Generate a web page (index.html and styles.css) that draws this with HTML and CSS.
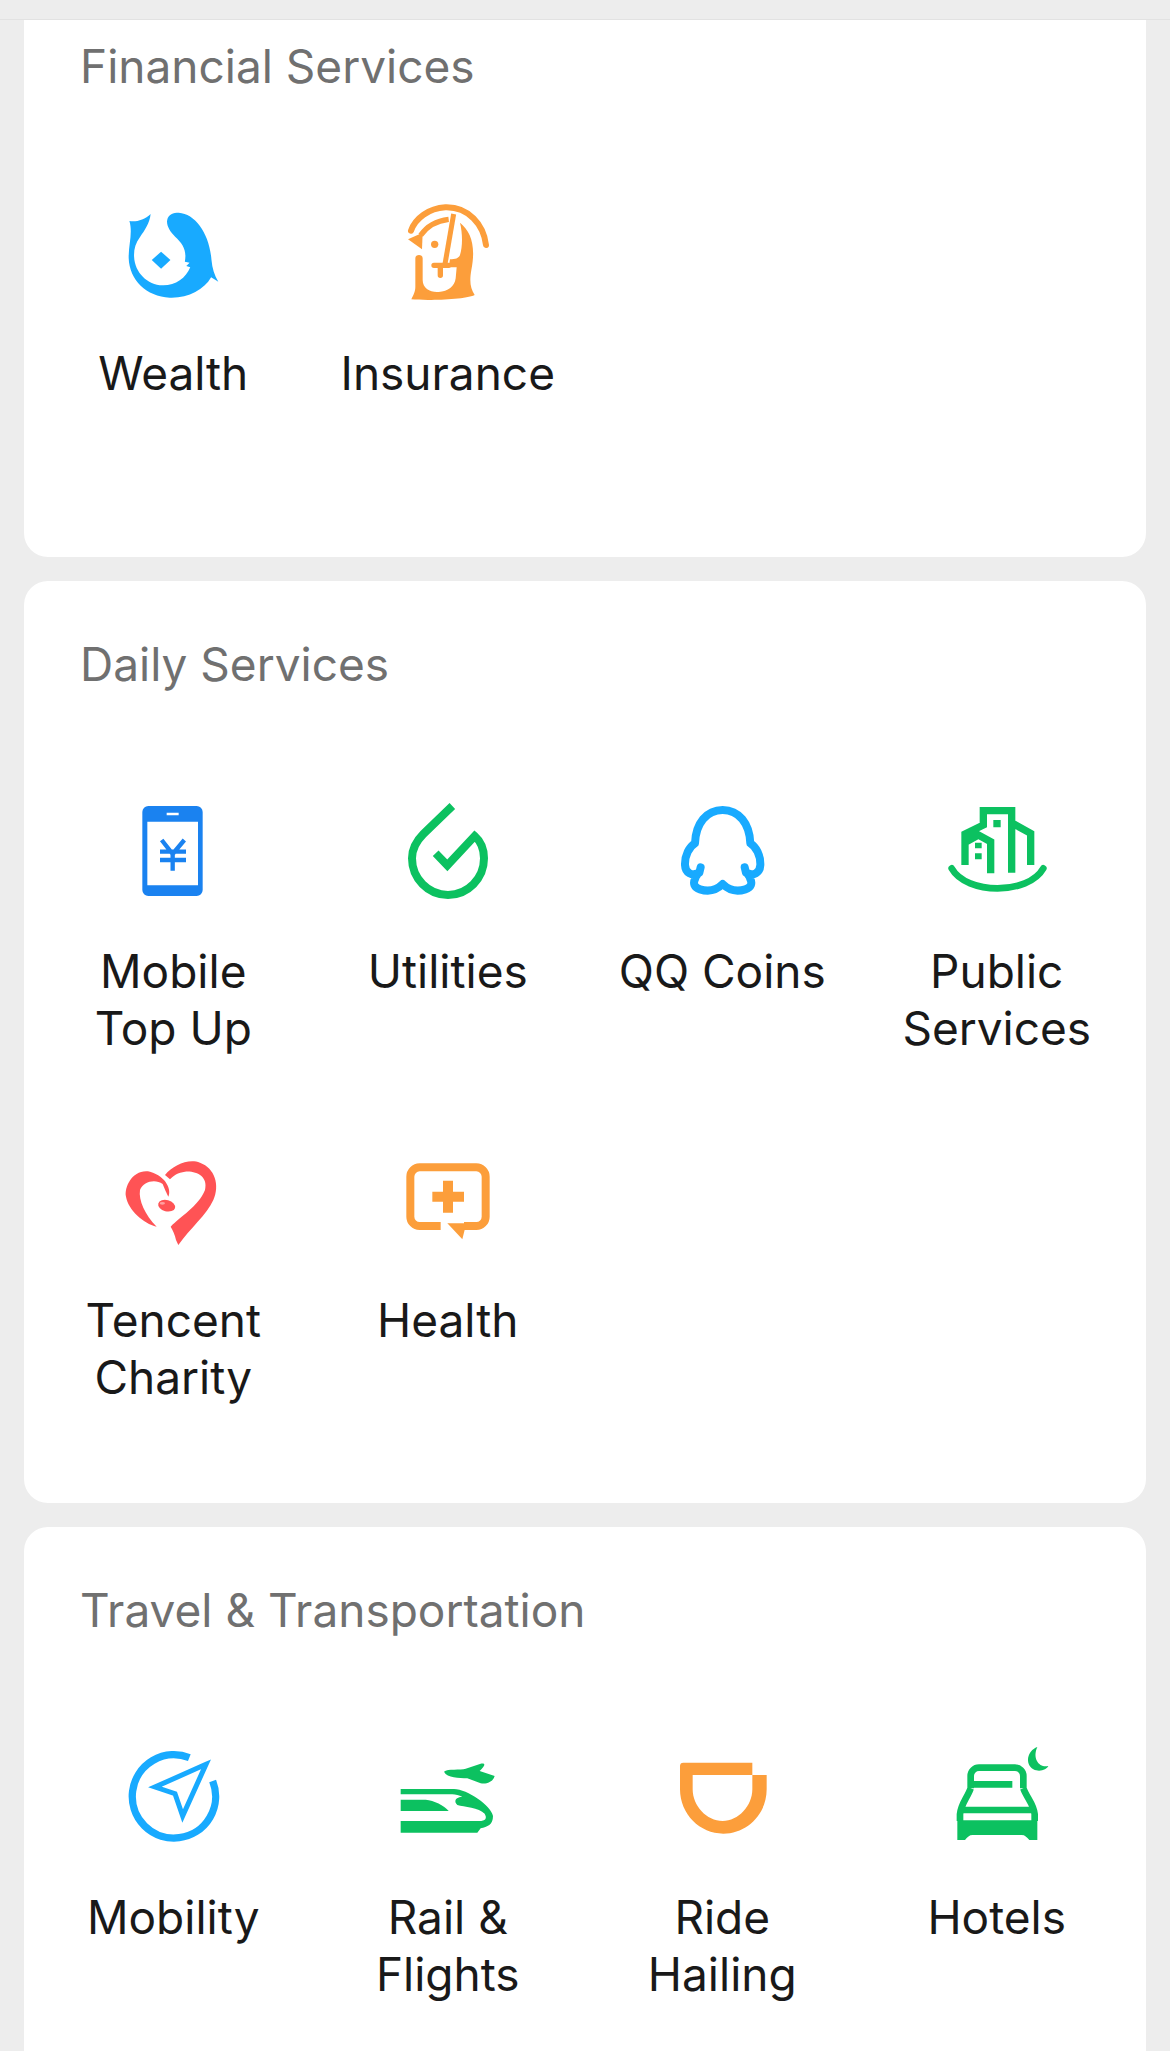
FILE: index.html
```html
<!DOCTYPE html>
<html lang="en">
<head>
<meta charset="UTF-8">
<meta name="viewport" content="width=device-width, initial-scale=1.0">
<title>Services</title>
<link rel="stylesheet" href="styles.css">
</head>
<body>
<div class="top-bar"></div>
<main class="sections">

  <!-- Financial Services -->
  <section class="card card-scrolled">
    <h2 class="card-title">Financial Services</h2>
    <div class="grid">
      <div class="item">
        <svg class="icon sky" viewBox="27 33 324 324">
          <g transform="translate(-26 0) scale(1.08 1)">
            <path d="M78 93C95 97 120 90 137 72C134 100 120 122 108 140C94 160 90 180 91 200C93 248 128 284 170 286C205 287 235 265 247 232L236 228L245 218L232 215C238 180 225 160 205 140C190 125 180 105 183 90C186 72 200 68 215 68C262 72 300 130 306 210C308 235 314 255 325 275L305 262C285 300 240 325 190 323C125 320 78 270 76 205C75 165 88 130 78 93Z"/>
            <path d="M166 185L192 210L166 236L140 210Z"/>
          </g>
        </svg>
        <div class="label">Wealth</div>
      </div>
      <div class="item">
        <svg class="icon orange" viewBox="26 33 324 324">
          <path class="line" stroke-width="18" stroke-linecap="round" d="M77 122C90 85 130 55 180 52C250 50 295 105 302 165"/>
          <path class="line" stroke-width="16" d="M106 136C125 108 155 92 190 88"/>
          <path d="M68 148L112 128L110 178Z"/>
          <circle cx="148" cy="163" r="11"/>
          <path class="line" stroke-width="15" d="M205 72L178 228"/>
          <path class="line" stroke-width="16" stroke-linecap="round" d="M146 226H190M165 226V256"/>
          <path d="M224 98C258 125 272 170 258 240C252 275 255 295 268 315C235 330 120 332 78 328C85 312 90 305 90 290V205C90 192 112 192 112 205V270C112 295 135 308 160 306C188 304 208 290 211 265L214 232H190L194 208C210 208 220 205 224 195C232 170 232 130 224 98Z"/>
        </svg>
        <div class="label">Insurance</div>
      </div>
    </div>
  </section>

  <!-- Daily Services -->
  <section class="card">
    <h2 class="card-title">Daily Services</h2>
    <div class="grid">
      <div class="item">
        <svg class="icon blue" viewBox="57 57 324 324">
          <path fill-rule="evenodd" d="M145 78H290A18 18 0 0 1 308 96V330A18 18 0 0 1 290 348H145A18 18 0 0 1 127 330V96A18 18 0 0 1 145 78ZM142 125V316H294V125ZM200 98V106H236V98Z"/>
          <path class="line" stroke-width="13" d="M185 180L218 222L253 180M180 215H258M180 240H258M218 222V272"/>
        </svg>
        <div class="label">Mobile<br>Top Up</div>
      </div>
      <div class="item">
        <svg class="icon green" viewBox="880 57 324 324">
          <path class="line" stroke-width="24" d="M1055 78L968 162C945 185 934 208 934 235C934 295 982 345 1042 345C1102 345 1150 295 1150 235C1150 205 1138 182 1122 168L1040 256L1005 220"/>
        </svg>
        <div class="label">Utilities</div>
      </div>
      <div class="item">
        <svg class="icon sky" viewBox="54 57 324 324">
          <path class="line" stroke-width="24" stroke-linejoin="round" d="M218 90C170 90 137 130 135 190C118 200 104 225 105 255C106 278 125 290 148 278L152 262C150 280 138 285 136 295C128 310 132 322 150 328C175 336 200 330 218 312C236 330 261 336 286 328C304 322 308 310 300 295C298 285 286 280 284 262L288 278C311 290 330 278 331 255C332 225 318 200 301 190C299 130 266 90 218 90Z"/>
        </svg>
        <div class="label">QQ Coins</div>
      </div>
      <div class="item">
        <svg class="icon green" viewBox="879 57 324 324">
          <path class="line" stroke-width="20" stroke-linecap="round" d="M905 265C950 345 1135 345 1180 265"/>
          <path class="line" stroke-width="22" d="M945 255V162L1000 135V92H1085V278M1088 130L1142 160V255M950 185L985 165L1022 185V280"/>
          <path d="M1030 120H1052V142H1030ZM975 188H995V205H975ZM975 220H995V238H975Z"/>
        </svg>
        <div class="label">Public<br>Services</div>
      </div>
      <div class="item">
        <svg class="icon coral" viewBox="57 24 324 324">
          <path d="M195 105C220 75 265 55 300 68C345 85 360 135 340 180C320 225 270 265 235 315L228 300C225 285 218 270 212 260C240 230 295 200 315 150C325 110 290 92 255 95C235 97 218 108 210 118Z"/>
          <path d="M205 170C215 150 200 110 150 95C100 85 72 140 78 170C85 210 130 250 170 260C135 225 115 180 120 150C130 125 165 115 188 132C195 150 205 170 205 170Z"/>
          <ellipse cx="200" cy="197" rx="26" ry="17" transform="rotate(15 200 197)"/>
          <ellipse class="shine" cx="187" cy="190" rx="8" ry="4"/>
        </svg>
        <div class="label">Tencent<br>Charity</div>
      </div>
      <div class="item">
        <svg class="icon orange" viewBox="880 24 324 324">
          <path class="line" stroke-width="24" d="M1020 258H957A28 28 0 0 1 929 230V110A28 28 0 0 1 957 82H1127A28 28 0 0 1 1155 110V230A28 28 0 0 1 1127 258H1090"/>
          <path d="M1040 250H1097L1085 298Z"/>
          <path d="M1027 122H1057V155H1090V185H1057V218H1027V185H995V155H1027Z"/>
        </svg>
        <div class="label">Health</div>
      </div>
    </div>
  </section>

  <!-- Travel & Transportation -->
  <section class="card">
    <h2 class="card-title">Travel &amp; Transportation</h2>
    <div class="grid">
      <div class="item">
        <svg class="icon sky" viewBox="57 42 324 324">
          <path class="line" stroke-width="22" d="M268 80A125 125 0 1 0 338 150"/>
          <path class="line" stroke-width="15" d="M318 100L165 168L225 188L248 255Z"/>
        </svg>
        <div class="label">Mobility</div>
      </div>
      <div class="item">
        <svg class="icon green" viewBox="880 42 324 324">
          <path d="M1030 122C1040 112 1080 118 1095 113L1140 98C1158 96 1152 105 1137 120L1182 135C1177 152 1160 160 1140 157L1100 142C1075 140 1040 142 1030 122Z"/>
          <path d="M900 174H1060C1100 174 1172 225 1177 255C1177 282 1160 287 1140 292L1130 305H900V270H1135C1155 270 1160 262 1152 248C1135 230 1090 228 1070 222C1058 210 1065 198 1085 197C1075 194 1065 190 1055 190H900Z"/>
          <path d="M900 206H975C1000 208 1030 223 1044 240H900Z"/>
        </svg>
        <div class="label">Rail &amp;<br>Flights</div>
      </div>
      <div class="item">
        <svg class="icon orange" viewBox="54 42 324 324">
          <path fill-rule="evenodd" d="M100 95H307V132H350V175C350 250 290 308 220 308C150 308 90 250 90 175V105A10 10 0 0 1 100 95ZM128 132V175C128 225 170 270 218 270C265 270 307 225 307 175V132Z"/>
        </svg>
        <div class="label">Ride<br>Hailing</div>
      </div>
      <div class="item">
        <svg class="icon green" viewBox="879 42 324 324">
          <path d="M1162 48C1130 60 1125 100 1150 115C1170 125 1190 115 1195 105C1170 112 1145 85 1162 48Z"/>
          <path class="line" stroke-width="20" d="M962 172V135A25 25 0 0 1 987 110H1095A25 25 0 0 1 1120 135V172M970 160H1087M962 172C952 200 932 220 930 250V270M1120 172C1130 200 1152 220 1154 250V270M940 237H1145"/>
          <path d="M922 268H1162V327H1138C1130 318 1125 312 1115 312H968C958 312 952 318 945 327H922Z"/>
        </svg>
        <div class="label">Hotels</div>
      </div>
    </div>
  </section>

</main>
</body>
</html>
```

FILE: styles.css
```css
html, body {
  margin: 0;
  height: 100%;
  overflow: hidden;
}
body {
  font-family: Inter, 'Noto Sans', sans-serif;
  background-color: #ededed;
  color: #191919;
}
.top-bar {
  height: 19px;
  border-bottom: 1px solid #e2e2e2;
}
.sections {
  display: flex;
  flex-direction: column;
  gap: 24px;
  padding: 0 24px;
}
.card {
  background: #fff;
  border-radius: 24px;
  padding: 54px 12px 97px;
}
.card-scrolled {
  border-radius: 0 0 24px 24px;
  padding-top: 17px;
  padding-bottom: 98px;
}
.card-title {
  margin: 0 0 106px 44px;
  font-size: 46px;
  font-weight: 400;
  line-height: 58px;
  color: #707070;
}
.grid {
  display: grid;
  grid-template-columns: repeat(4, 1fr);
  row-gap: 91px;
}
.item {
  display: flex;
  flex-direction: column;
  align-items: center;
  gap: 36px;
}
.icon {
  display: block;
  width: 108px;
  height: 108px;
}
.label {
  min-height: 114px;
  font-size: 46px;
  line-height: 57px;
  text-align: center;
}
.sky { fill: #18aaff; stroke: #18aaff; }
.blue { fill: #1a82f0; stroke: #1a82f0; }
.green { fill: #0cc160; stroke: #0cc160; }
.orange { fill: #fc9e3b; stroke: #fc9e3b; }
.coral { fill: #ff5355; stroke: #ff5355; }
.icon path, .icon circle, .icon ellipse {
  stroke: none;
}
.icon .line {
  fill: none;
  stroke: inherit;
}
.icon .shine {
  fill: #ffa0a0;
}
```
